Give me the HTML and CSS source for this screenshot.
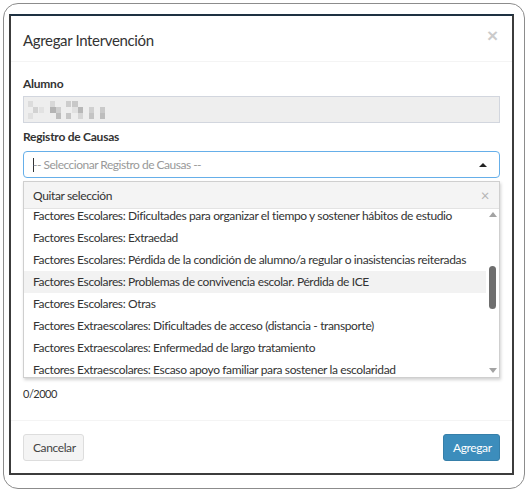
FILE: index.html
```html
<!DOCTYPE html>
<html lang="es">
<head>
<meta charset="utf-8">
<title>Agregar Intervención</title>
<link rel="stylesheet" href="styles.css">
</head>
<body>
<div class="frame">
  <div class="modal">
    <div class="modal-header">
      <h4 class="modal-title">Agregar Intervención</h4>
      <button class="close" type="button">×</button>
    </div>
    <div class="modal-body">
      <div class="group">
        <label class="label">Alumno</label>
        <div class="input disabled">
          <svg class="mosaic" width="80" height="18" viewBox="0 0 80 18">
            <rect x="0" y="0" width="5" height="6" fill="#dcdcdc"/>
            <rect x="5" y="6" width="5" height="6" fill="#d2d2d2"/>
            <rect x="0" y="12" width="5" height="6" fill="#e0e0e0"/>
            <rect x="11" y="6" width="5" height="6" fill="#e2e2e2"/>
            <rect x="22" y="0" width="5" height="6" fill="#d8d8d8"/>
            <rect x="22" y="6" width="6" height="6" fill="#b4b4b4"/>
            <rect x="28" y="6" width="5" height="6" fill="#cfcfcf"/>
            <rect x="28" y="12" width="5" height="6" fill="#bdbdbd"/>
            <rect x="38" y="0" width="5" height="6" fill="#cdcdcd"/>
            <rect x="38" y="12" width="5" height="6" fill="#c6c6c6"/>
            <rect x="44" y="0" width="6" height="6" fill="#c8c8c8"/>
            <rect x="44" y="6" width="6" height="6" fill="#e1e1e1"/>
            <rect x="50" y="6" width="5" height="6" fill="#b8b8b8"/>
            <rect x="50" y="12" width="5" height="6" fill="#d6d6d6"/>
            <rect x="61" y="6" width="5" height="6" fill="#d0d0d0"/>
            <rect x="61" y="12" width="5" height="6" fill="#c4c4c4"/>
            <rect x="72" y="6" width="5" height="6" fill="#c9c9c9"/>
            <rect x="72" y="12" width="5" height="6" fill="#bdbdbd"/>
          </svg>
        </div>
      </div>
      <div class="group causes">
        <label class="label">Registro de Causas</label>
        <div class="select is-open">
          <span class="cursor"></span><span class="placeholder">-- Seleccionar Registro de Causas --</span>
          <span class="select-arrow"></span>
        </div>
        <div class="dropdown">
          <div class="clear-row">
            <span>Quitar selección</span>
            <span class="clear-x">×</span>
          </div>
          <div class="options">
            <ul class="option-list">
              <li>Factores Escolares: Dificultades para organizar el tiempo y sostener hábitos de estudio</li>
              <li>Factores Escolares: Extraedad</li>
              <li>Factores Escolares: Pérdida de la condición de alumno/a regular o inasistencias reiteradas</li>
              <li class="hover">Factores Escolares: Problemas de convivencia escolar. Pérdida de ICE</li>
              <li>Factores Escolares: Otras</li>
              <li>Factores Extraescolares: Dificultades de acceso (distancia - transporte)</li>
              <li>Factores Extraescolares: Enfermedad de largo tratamiento</li>
              <li>Factores Extraescolares: Escaso apoyo familiar para sostener la escolaridad</li>
            </ul>
            <div class="scrollbar">
              <span class="sb-up"></span>
              <span class="sb-thumb"></span>
              <span class="sb-down"></span>
            </div>
          </div>
        </div>
      </div>
      <div class="group notes">
        <textarea class="textarea" maxlength="2000"></textarea>
        <div class="counter">0/2000</div>
      </div>
    </div>
    <div class="modal-footer">
      <button class="btn btn-default" type="button">Cancelar</button>
      <button class="btn btn-primary" type="button">Agregar</button>
    </div>
  </div>
</div>
</body>
</html>
```

FILE: styles.css
```css
* {
  box-sizing: border-box;
}

html, body {
  margin: 0;
  padding: 0;
  background: #ffffff;
}

body {
  font-family: Lato, "Open Sans", "Liberation Sans", sans-serif;
  font-size: 12px;
  letter-spacing: -0.37px;
  color: #333333;
}

/* window frame around the dialog */
.frame {
  margin: 3px;
  width: 522px;
  height: 486px;
  border: 1px solid #8c8c8c;
  border-radius: 15px;
  padding: 10px 10px 13px 5px;
}

.modal {
  width: 505px;
  height: 461px;
  border: 2px solid #3c3c3c;
  border-top-color: #1e3142;
  background: #ffffff;
  display: flex;
  flex-direction: column;
}

/* header */
.modal-header {
  height: 46px;
  border-bottom: 1px solid #f4f4f4;
  display: flex;
  align-items: center;
  justify-content: space-between;
  padding: 0 14px 0 12px;
}

.modal-title {
  margin: 0;
  font-size: 15px;
  letter-spacing: -0.35px;
  font-weight: 400;
  color: #333333;
  padding-top: 2px;
}

.close {
  border: 0;
  background: none;
  padding: 0;
  font-family: "Liberation Sans", sans-serif;
  font-size: 19px;
  font-weight: 700;
  line-height: 1;
  color: #000000;
  opacity: 0.2;
  margin-top: -6px;
}

/* body */
.modal-body {
  flex: 1;
  padding: 14px 12px 0 12px;
}

.group {
  display: flex;
  flex-direction: column;
}

.label {
  font-weight: 700;
  font-size: 12px;
  letter-spacing: -0.25px;
  line-height: 16px;
  height: 16px;
  margin-bottom: 4px;
}

.input {
  height: 27px;
  border: 1px solid #d2d6de;
  display: flex;
  align-items: center;
  padding-left: 4px;
}

.input.disabled {
  background: #eeeeee;
}

.causes {
  position: relative;
  margin-top: 6px;
}

.causes .label {
  margin-bottom: 6px;
}

.select {
  position: relative;
  height: 27px;
  border: 1px solid #66afe9;
  border-radius: 4px;
  display: flex;
  align-items: center;
  padding-left: 9px;
}

.cursor {
  display: inline-block;
  width: 1px;
  height: 14px;
  background: #333333;
  margin-right: -1px;
}

.placeholder {
  color: #999999;
  letter-spacing: -0.5px;
}

.select-arrow {
  position: absolute;
  right: 12px;
  top: 11px;
  width: 0;
  height: 0;
  border-left: 4px solid transparent;
  border-right: 4px solid transparent;
  border-bottom: 4px solid #222222;
}

/* open dropdown panel */
.dropdown {
  position: absolute;
  left: 0;
  right: 0;
  top: calc(100% + 3px);
  height: 197px;
  border: 1px solid #cfcfcf;
  background: #ffffff;
  box-shadow: 1px 2px 3px rgba(0, 0, 0, 0.18);
  display: flex;
  flex-direction: column;
  z-index: 2;
}

.clear-row {
  height: 27px;
  flex: none;
  background: #f4f4f4;
  border-bottom: 1px solid #e3e3e3;
  display: flex;
  align-items: center;
  justify-content: space-between;
  padding: 0 10px 0 9px;
}

.clear-x {
  color: #b5b5b5;
  font-size: 15px;
  line-height: 1;
}

.options {
  position: relative;
  flex: 1;
  overflow: hidden;
}

.option-list {
  list-style: none;
  margin: -4px 0 0 0;
  padding: 0;
  margin-right: 13px;
}

.option-list li {
  height: 22px;
  line-height: 22px;
  padding-left: 9px;
  white-space: nowrap;
}

.option-list li.hover {
  background: #f2f2f2;
}

.scrollbar {
  position: absolute;
  top: 0;
  right: 0;
  bottom: 0;
  width: 13px;
  background: #ffffff;
}

.sb-up,
.sb-down {
  position: absolute;
  left: 3px;
  width: 0;
  height: 0;
  border-left: 4px solid transparent;
  border-right: 4px solid transparent;
}

.sb-up {
  top: 3px;
  border-bottom: 5px solid #a3a3a3;
}

.sb-down {
  bottom: 4px;
  border-top: 5px solid #a3a3a3;
}

.sb-thumb {
  position: absolute;
  left: 3px;
  top: 57px;
  width: 7px;
  height: 43px;
  border-radius: 4px;
  background: #6e6e6e;
}

.notes {
  margin-top: 3px;
}

.textarea {
  height: 196px;
  border: 1px solid #d2d6de;
  resize: none;
  font: inherit;
}

.counter {
  margin-top: 9px;
  line-height: 16px;
  font-size: 11px;
  letter-spacing: -0.5px;
}

/* footer */
.modal-footer {
  height: 53px;
  border-top: 1px solid #f4f4f4;
  display: flex;
  align-items: center;
  justify-content: space-between;
  padding: 1px 12px 0 12px;
}

.btn {
  height: 27px;
  border-radius: 3px;
  font-family: inherit;
  font-size: 12px;
  letter-spacing: -0.4px;
  padding: 0 9px;
  cursor: pointer;
}

.btn-default {
  width: 61px;
  background: #f4f4f4;
  border: 1px solid #dddddd;
  color: #444444;
}

.btn-primary {
  width: 57px;
  background: #3c8dbc;
  border: 1px solid #367fa9;
  color: #ffffff;
}
```
